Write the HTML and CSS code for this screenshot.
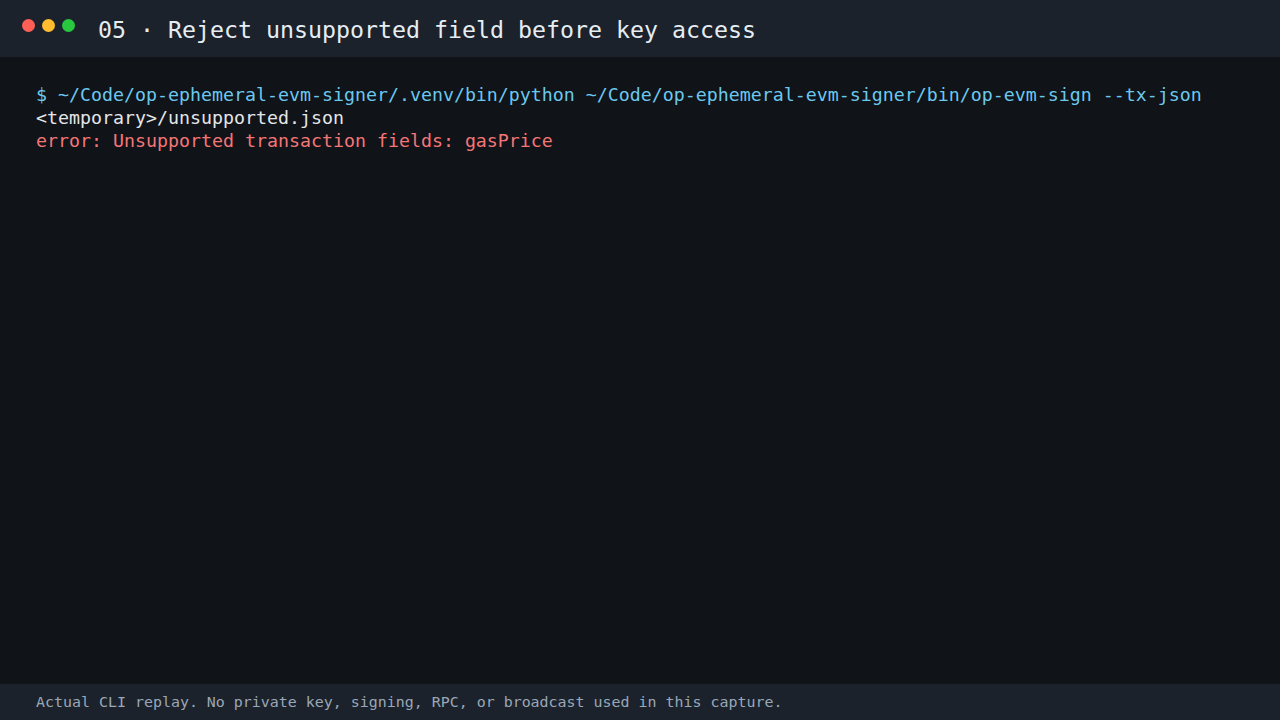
FILE: index.html
```html
<!DOCTYPE html>
<html>
<head>
<meta charset="utf-8">
<link rel="stylesheet" href="styles.css">
</head>
<body>
<div class="app">
  <header class="titlebar">
    <div class="dots">
      <span class="dot red"></span>
      <span class="dot yellow"></span>
      <span class="dot green"></span>
    </div>
    <h1 class="title">05 · Reject unsupported field before key access</h1>
  </header>
  <main class="terminal">
    <div class="line cmd">$ ~/Code/op-ephemeral-evm-signer/.venv/bin/python ~/Code/op-ephemeral-evm-signer/bin/op-evm-sign --tx-json</div>
    <div class="line out">&lt;temporary&gt;/unsupported.json</div>
    <div class="line err">error: Unsupported transaction fields: gasPrice</div>
  </main>
  <footer class="footer">Actual CLI replay. No private key, signing, RPC, or broadcast used in this capture.</footer>
</div>
</body>
</html>
```
FILE: styles.css
```css
* { box-sizing: border-box; }
html, body { margin: 0; padding: 0; }
body {
  background: #101318;
  font-family: "DejaVu Sans Mono", monospace;
}
.app {
  width: 1280px;
  height: 720px;
  display: flex;
  flex-direction: column;
}
.titlebar {
  height: 57px;
  background: #1b222c;
  display: flex;
  align-items: center;
  padding-left: 22px;
}
.dots {
  display: flex;
  gap: 7px;
  margin-top: -7px;
}
.dot {
  width: 13px;
  height: 13px;
  border-radius: 50%;
  display: block;
}
.red { background: #ff5f57; }
.yellow { background: #febc2e; }
.green { background: #28c840; }
.title {
  margin: 2px 0 0 23px;
  font-weight: normal;
  font-size: 23.25px;
  color: #e6edf3;
}
.terminal {
  flex: 1;
  padding: 26px 36px 0;
}
.line {
  font-size: 18.28px;
  line-height: 23px;
  white-space: pre-wrap;
}
.cmd { color: #6bc8ee; }
.out { color: #e4e6e8; }
.err { color: #f47676; }
.footer {
  height: 36px;
  background: #1b222c;
  color: #9aa7b6;
  font-size: 14.94px;
  padding-left: 36px;
  display: flex;
  align-items: center;
}
```
